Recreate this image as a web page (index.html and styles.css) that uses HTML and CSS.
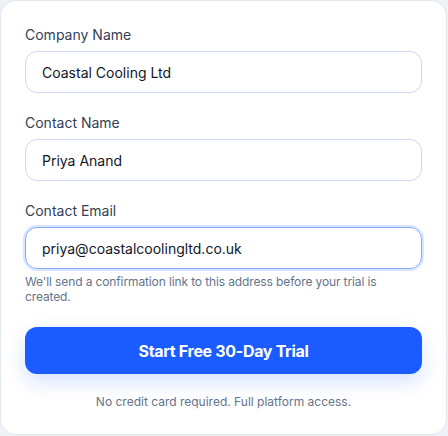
FILE: index.html
```html
<!DOCTYPE html>
<html lang="en">
<head>
<meta charset="utf-8">
<title>Start trial</title>
<link rel="stylesheet" href="styles.css">
</head>
<body>
<div class="card">
  <form class="form">
    <div class="field">
      <label class="label">Company Name</label>
      <div class="input">Coastal Cooling Ltd</div>
    </div>
    <div class="field">
      <label class="label">Contact Name</label>
      <div class="input">Priya Anand</div>
    </div>
    <div class="field field-last">
      <label class="label">Contact Email</label>
      <div class="input focused">priya@coastalcoolingltd.co.uk</div>
      <p class="help">We'll send a confirmation link to this address before your trial is created.</p>
    </div>
    <button type="button" class="cta">Start Free 30-Day Trial</button>
    <p class="note">No credit card required. Full platform access.</p>
  </form>
</div>
</body>
</html>
```

FILE: styles.css
```css
* { box-sizing: border-box; }
html, body { margin: 0; padding: 0; }
body {
  background: #eef2f7;
  font-family: "Inter", "Liberation Sans", sans-serif;
  width: 448px;
  height: 436px;
}
.card {
  width: 447px;
  height: 435px;
  background: #ffffff;
  border: 1px solid #e2e8f0;
  border-radius: 16px;
  padding: 24px 24px 0 24px;
}
.form {
  display: flex;
  flex-direction: column;
}
.field {
  display: flex;
  flex-direction: column;
  margin-bottom: 20px;
}
.label {
  font-size: 14px;
  line-height: 20px;
  color: #334155;
  margin-bottom: 6px;
}
.input {
  height: 42px;
  border: 1px solid #cfd8e6;
  border-radius: 12px;
  padding: 0 16px;
  display: flex;
  align-items: center;
  font-size: 14px;
  color: #0f172a;
}
.input.focused {
  border-color: #86a9f9;
  box-shadow: 0 0 0 2px rgba(26, 92, 255, 0.16);
}
.help {
  margin: 5px 0 0 0;
  font-size: 12px;
  line-height: 15px;
  color: #64748b;
  letter-spacing: -0.01em;
}
.field-last { margin-bottom: 23px; }
.cta {
  height: 47px;
  border: none;
  border-radius: 12px;
  background: #1a5cff;
  color: #ffffff;
  font-family: inherit;
  font-size: 16px;
  font-weight: 700;
  letter-spacing: -0.02em;
  box-shadow: 0 8px 20px rgba(26, 92, 255, 0.18);
}
.note {
  margin: 20px 0 0 0;
  text-align: center;
  font-size: 12px;
  line-height: 15px;
  color: #64748b;
}
```
